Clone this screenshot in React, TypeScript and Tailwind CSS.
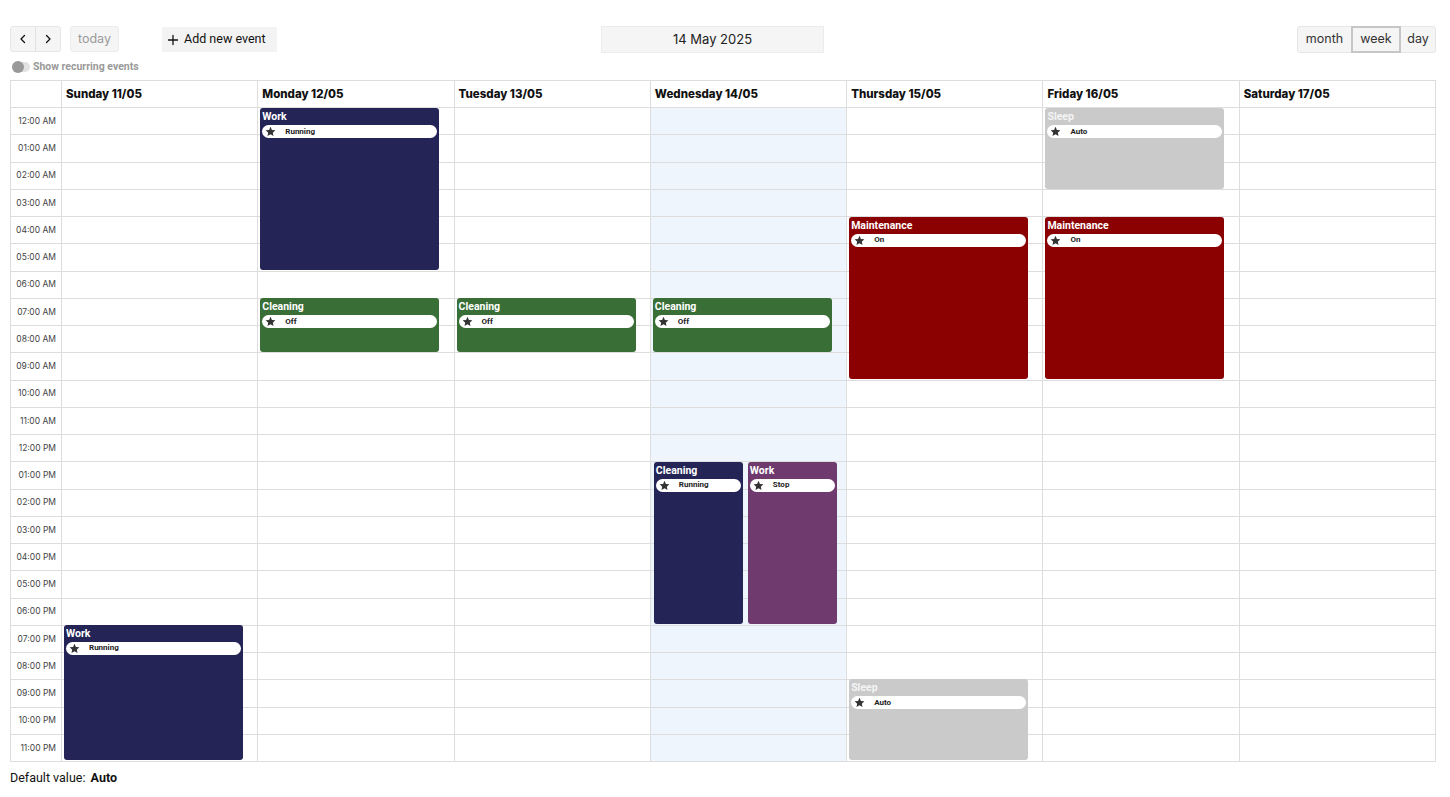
import React from "react";

const HOURS = ["12:00 AM","01:00 AM","02:00 AM","03:00 AM","04:00 AM","05:00 AM","06:00 AM","07:00 AM","08:00 AM","09:00 AM","10:00 AM","11:00 AM","12:00 PM","01:00 PM","02:00 PM","03:00 PM","04:00 PM","05:00 PM","06:00 PM","07:00 PM","08:00 PM","09:00 PM","10:00 PM","11:00 PM"];
const DAYS = ["Sunday 11/05","Monday 12/05","Tuesday 13/05","Wednesday 14/05","Thursday 15/05","Friday 16/05","Saturday 17/05"];
const ROW = 653 / 24;

type Ev = { day: number; start: number; end: number; title: string; label: string; color: string; titleColor?: string; left?: number; width?: number };

const EVENTS: Ev[] = [
  { day: 0, start: 19, end: 24, title: "Work", label: "Running", color: "#252457" },
  { day: 1, start: 0, end: 6, title: "Work", label: "Running", color: "#252457" },
  { day: 1, start: 7, end: 9, title: "Cleaning", label: "Off", color: "#3a6e37" },
  { day: 2, start: 7, end: 9, title: "Cleaning", label: "Off", color: "#3a6e37" },
  { day: 3, start: 7, end: 9, title: "Cleaning", label: "Off", color: "#3a6e37" },
  { day: 3, start: 13, end: 19, title: "Cleaning", label: "Running", color: "#252457", left: 3, width: 89 },
  { day: 3, start: 13, end: 19, title: "Work", label: "Stop", color: "#6f3a6e", left: 97, width: 89 },
  { day: 4, start: 4, end: 10, title: "Maintenance", label: "On", color: "#8b0000" },
  { day: 4, start: 21, end: 24, title: "Sleep", label: "Auto", color: "#cacaca", titleColor: "#f4f4f4" },
  { day: 5, start: 0, end: 3, title: "Sleep", label: "Auto", color: "#cacaca", titleColor: "#f4f4f4" },
  { day: 5, start: 4, end: 10, title: "Maintenance", label: "On", color: "#8b0000" },
];

const Star = () => (
  <svg width="11" height="11" viewBox="0 0 24 24" className="shrink-0">
    <path d="M12 1.8l3.1 6.9 7.5.8-5.6 5.1 1.6 7.4L12 18.2 5.4 22l1.6-7.4L1.4 9.5l7.5-.8z" fill="#333" />
  </svg>
);

function Event({ ev }: { ev: Ev }) {
  const top = ev.start * ROW;
  const height = (ev.end - ev.start) * ROW - 1;
  const left = ev.left ?? 2;
  const width = ev.width ?? 179;
  return (
    <div
      className="absolute rounded-[3px] px-[2px] pt-[2px] overflow-hidden z-10"
      style={{ top, height, left, width, background: ev.color }}
    >
      <div
        className="text-[10.5px] font-bold leading-[14px]"
        style={{ color: ev.titleColor ?? "#fff", fontFamily: "Roboto, sans-serif" }}
      >
        {ev.title}
      </div>
      <div className="mt-[1px] h-[13px] bg-white rounded-full flex items-center pl-[3px]">
        <Star />
        <span
          className="ml-[9px] text-[8px] font-bold text-[#222] leading-none"
          style={{ fontFamily: "Roboto, sans-serif" }}
        >
          {ev.label}
        </span>
      </div>
    </div>
  );
}

export default function App() {
  const mont = { fontFamily: "Inter, 'Open Sans', sans-serif" };
  return (
    <div className="w-[1450px] h-[797px] bg-white pl-[10px] pr-[14px] pt-[26px]" style={{ fontFamily: "Roboto, sans-serif" }}>
      {/* toolbar */}
      <div className="flex items-start h-[27px]">
        <div className="flex h-[26px] border border-[#e6e6e6] rounded-[3px] bg-[#f5f5f5]">
          <button className="w-[25px] flex items-center justify-center border-r border-[#e0e0e0]">
            <svg width="12" height="12" viewBox="0 0 24 24" fill="none" stroke="#111" strokeWidth="2.6" strokeLinecap="round" strokeLinejoin="round"><path d="M15 5l-7 7 7 7" /></svg>
          </button>
          <button className="w-[24px] flex items-center justify-center">
            <svg width="12" height="12" viewBox="0 0 24 24" fill="none" stroke="#111" strokeWidth="2.6" strokeLinecap="round" strokeLinejoin="round"><path d="M9 5l7 7-7 7" /></svg>
          </button>
        </div>
        <button className="ml-[9px] w-[49px] h-[26px] rounded-[3px] border border-[#ececec] bg-[#f5f5f5] text-[12.5px] text-[#9a9a9a]" style={mont}>today</button>
        <button className="ml-[43px] mt-[1px] w-[115px] h-[25px] bg-[#f3f3f3] flex items-center pl-[5px] text-[12.5px] text-[#111]">
          <svg width="12" height="12" viewBox="0 0 24 24" fill="none" stroke="#111" strokeWidth="2.6" strokeLinecap="round"><path d="M12 3v18M3 12h18" /></svg>
          <span className="ml-[5px]">Add new event</span>
        </button>
        <div className="ml-[324px] w-[223px] h-[27px] bg-[#f5f5f5] border border-[#ececec] flex items-center justify-center text-[13px] text-[#222]" style={mont}>14 May 2025</div>
        <div className="ml-auto flex h-[27px] border border-[#e6e6e6] rounded-[3px] bg-[#f5f5f5] text-[12.5px] text-[#333]" style={mont}>
          <div className="w-[53px] flex items-center justify-center">month</div>
          <div className="w-[50px] flex items-center justify-center border-2 border-[#c6c6c6] -my-[1px]">week</div>
          <div className="w-[34px] flex items-center justify-center">day</div>
        </div>
      </div>
      <div className="flex items-center h-[27px] pl-[2px]">
        <div className="relative w-[18px] h-[10px] rounded-full bg-[#e2e2e2]">
          <div className="absolute left-0 top-[-1px] w-[12px] h-[12px] rounded-full bg-[#999]" />
        </div>
        <span className="ml-[3px] text-[10.5px] font-bold text-[#9a9a9a]">Show recurring events</span>
      </div>

      {/* calendar */}
      <div className="border border-[#dddddd]">
        <div className="grid grid-cols-[50px_repeat(7,1fr)] h-[27px] border-b border-[#dddddd]">
          <div />
          {DAYS.map((d) => (
            <div key={d} className="border-l border-[#dddddd] flex items-center pl-[4px] pt-[1px] text-[11.5px] font-extrabold text-[#111]" style={mont}>{d}</div>
          ))}
        </div>
        <div className="grid grid-cols-[50px_repeat(7,1fr)] h-[653px]">
          <div className="flex flex-col">
            {HOURS.map((h, i) => (
              <div key={h} className={`flex-1 flex items-center justify-end pr-[5px] text-[8.5px] text-[#444] ${i < 23 ? "border-b border-[#dddddd]" : ""}`} style={mont}>{h}</div>
            ))}
          </div>
          {DAYS.map((d, di) => (
            <div key={d} className={`relative border-l border-[#dddddd] flex flex-col ${di === 3 ? "bg-[#eef5fd]" : ""}`}>
              {HOURS.map((h, i) => (
                <div key={h} className={`flex-1 ${i < 23 ? "border-b border-[#dddddd]" : ""}`} />
              ))}
              {EVENTS.filter((e) => e.day === di).map((e, k) => (
                <Event key={k} ev={e} />
              ))}
            </div>
          ))}
        </div>
      </div>
      <div className="mt-[7px] text-[12.5px] text-[#111]">
        Default value: <span className="ml-[2px] font-bold">Auto</span>
      </div>
    </div>
  );
}
